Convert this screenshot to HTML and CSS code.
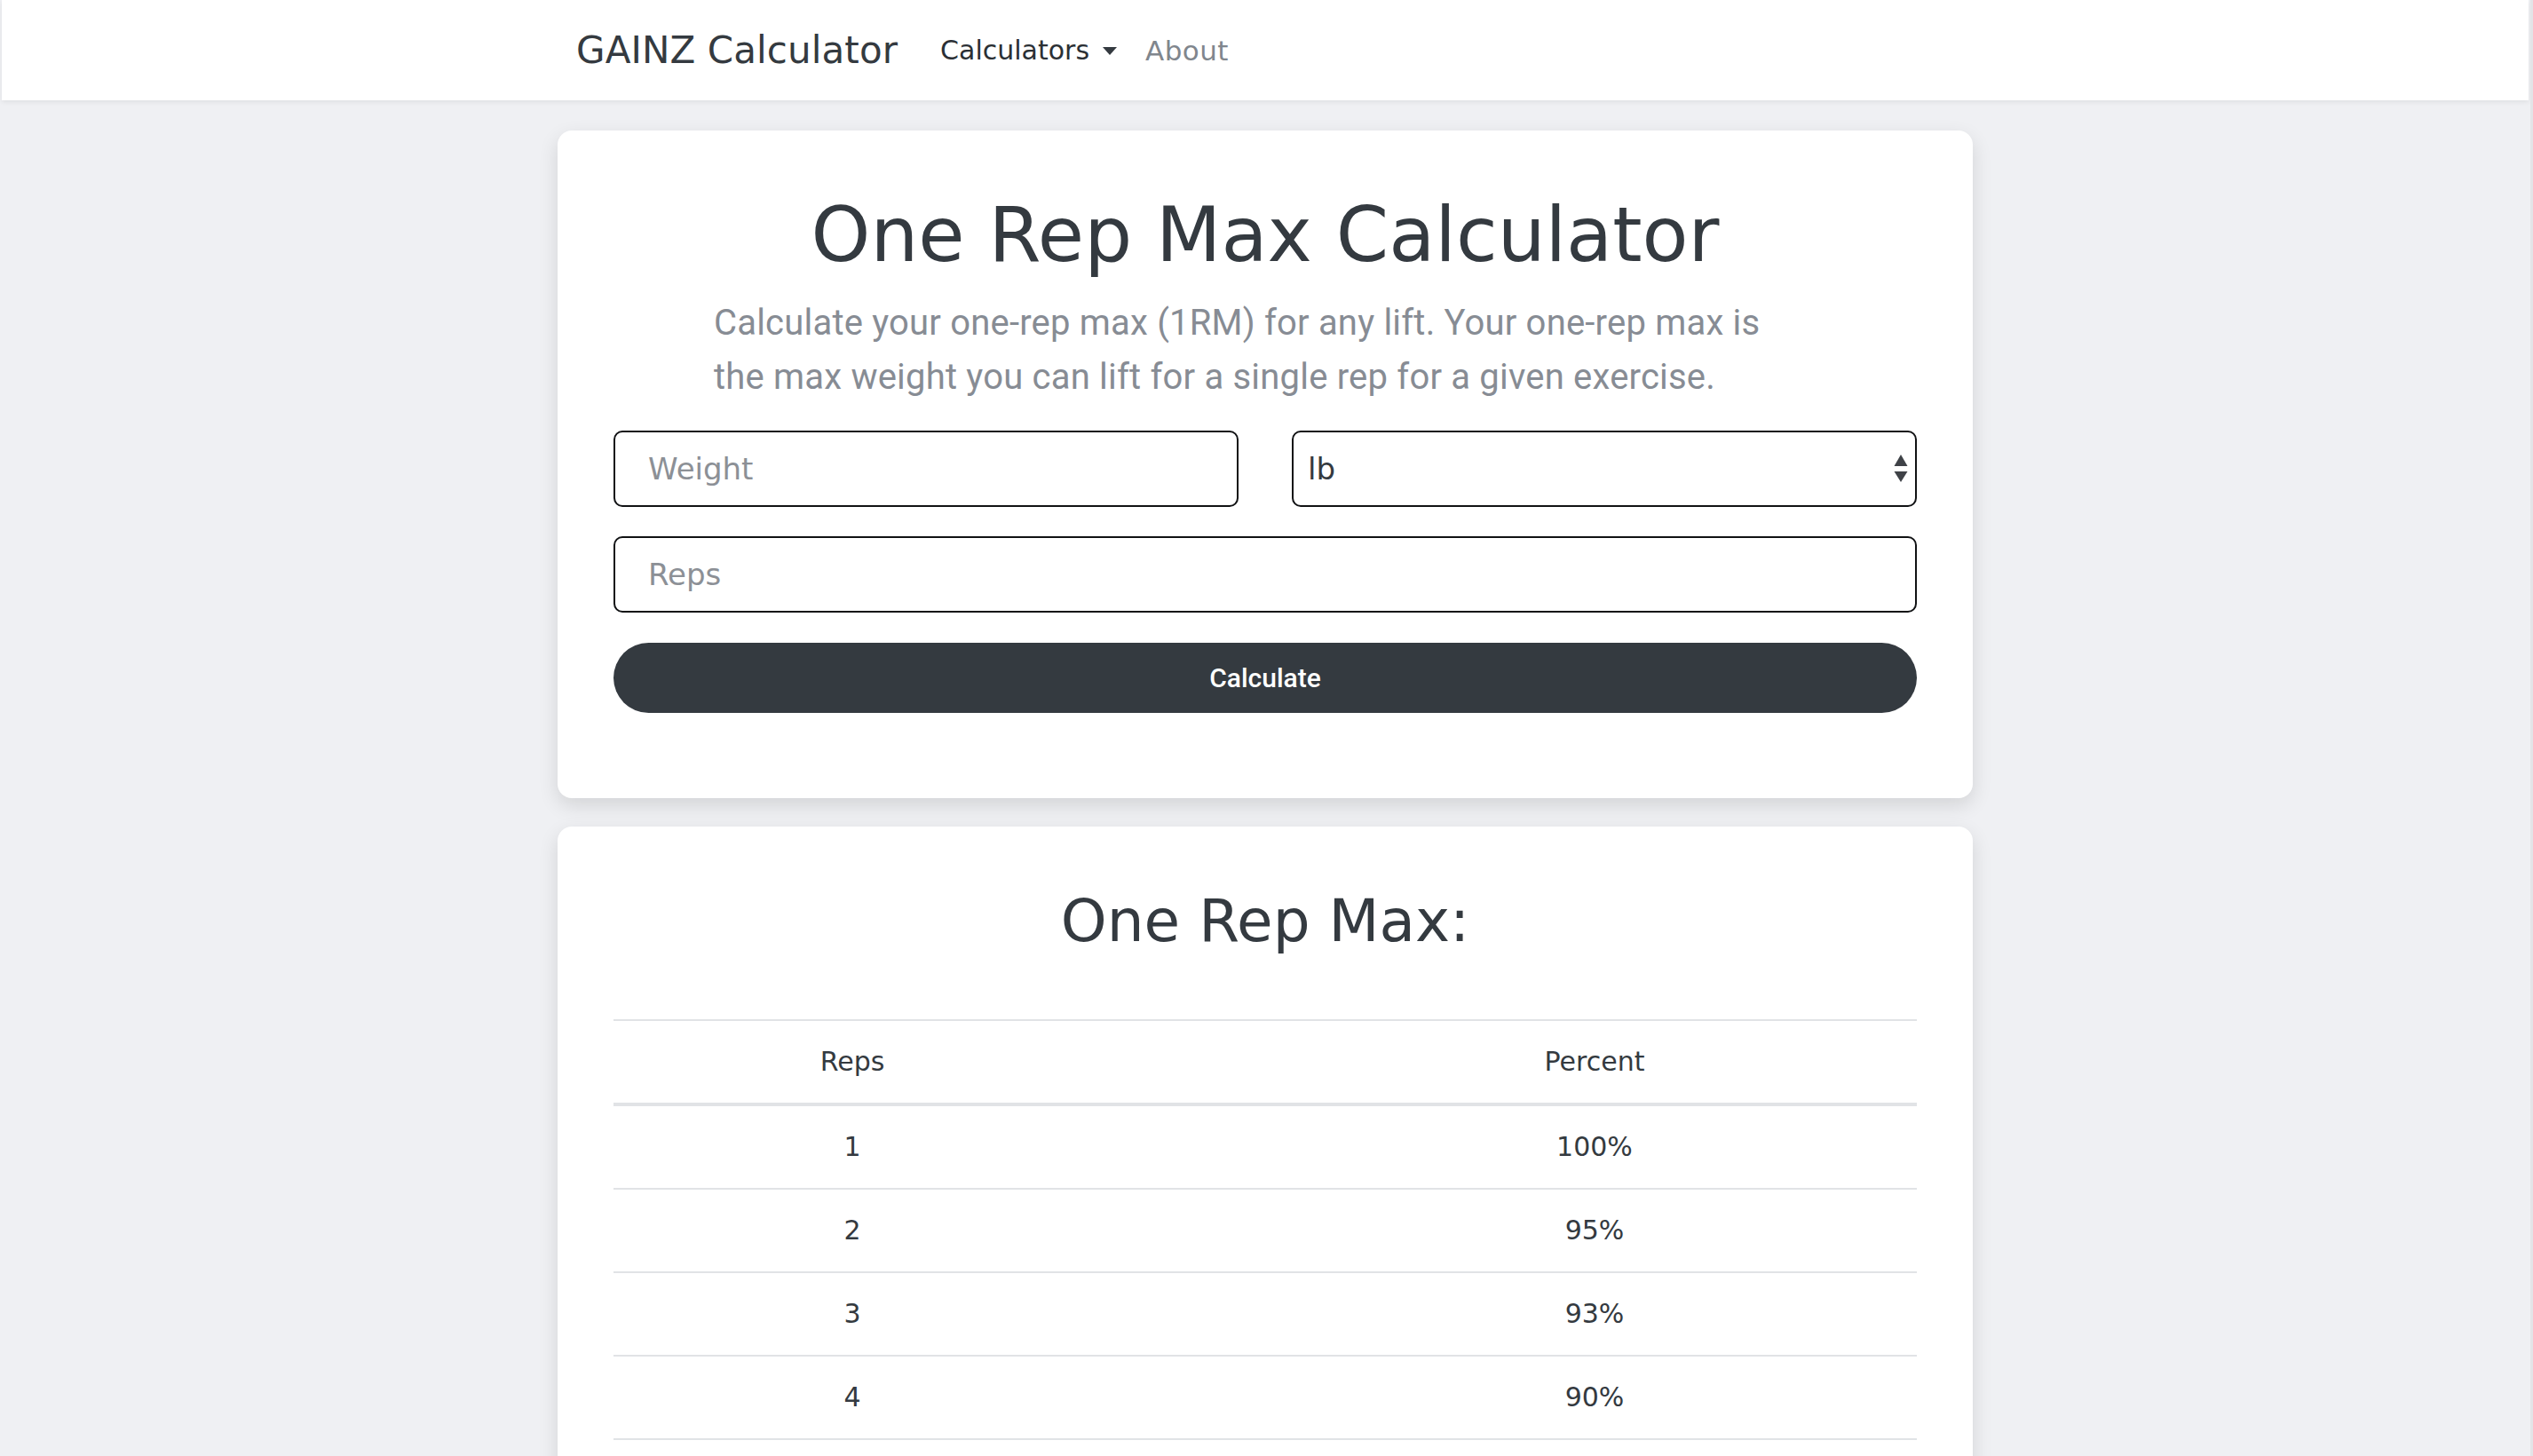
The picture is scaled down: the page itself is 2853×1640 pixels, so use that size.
FILE: index.html
```html
<!DOCTYPE html>
<html lang="en">
<head>
<meta charset="utf-8">
<title>One Rep Max Calculator | GAINZ Calculator</title>
<link rel="stylesheet" href="styles.css">
</head>
<body>
<header class="navbar">
  <div class="container nav-inner">
    <a class="brand" href="#">GAINZ Calculator</a>
    <nav class="nav-links">
      <a class="nav-link nav-dropdown" href="#">Calculators<span class="caret"></span></a>
      <a class="nav-link nav-muted" href="#">About</a>
    </nav>
  </div>
</header>
<main class="container main">
  <section class="card">
    <h1 class="title">One Rep Max Calculator</h1>
    <p class="lead">Calculate your one-rep max (1RM) for any lift. Your one-rep max is<br>the max weight you can lift for a single rep for a given exercise.</p>
    <form class="form">
      <div class="form-row">
        <input class="field" type="text" placeholder="Weight">
        <div class="select-wrap">
          <select class="field select">
            <option>lb</option>
            <option>kg</option>
          </select>
          <svg class="select-arrows" width="16" height="32" viewBox="0 0 16 32" aria-hidden="true">
            <path d="M8 0 L15.5 13 L0.5 13 Z" fill="#3f4247"/>
            <path d="M0.5 19 L15.5 19 L8 31 Z" fill="#3f4247"/>
          </svg>
        </div>
      </div>
      <input class="field" type="text" placeholder="Reps">
      <button class="btn" type="button">Calculate</button>
    </form>
  </section>
  <section class="card">
    <h2 class="subtitle">One Rep Max:</h2>
    <table class="table">
      <thead>
        <tr><th class="col-reps">Reps</th><th class="col-pct">Percent</th></tr>
      </thead>
      <tbody>
        <tr><td class="col-reps">1</td><td class="col-pct">100%</td></tr>
        <tr><td class="col-reps">2</td><td class="col-pct">95%</td></tr>
        <tr><td class="col-reps">3</td><td class="col-pct">93%</td></tr>
        <tr><td class="col-reps">4</td><td class="col-pct">90%</td></tr>
        <tr><td class="col-reps">5</td><td class="col-pct">87%</td></tr>
        <tr><td class="col-reps">6</td><td class="col-pct">85%</td></tr>
        <tr><td class="col-reps">7</td><td class="col-pct">83%</td></tr>
        <tr><td class="col-reps">8</td><td class="col-pct">80%</td></tr>
        <tr><td class="col-reps">9</td><td class="col-pct">77%</td></tr>
        <tr><td class="col-reps">10</td><td class="col-pct">75%</td></tr>
      </tbody>
    </table>
  </section>
</main>
</body>
</html>
```
FILE: styles.css
```css
html, body {
  margin: 0;
  padding: 0;
  overflow: hidden;
}

body {
  background: #eff0f3;
  border-right: 3px solid #e3e4e7;
  font-family: "DejaVu Sans", "Noto Sans", sans-serif;
  color: #343a40;
  min-height: 100vh;
  box-sizing: border-box;
}

a {
  text-decoration: none;
}

.container {
  width: 1594px;
  margin: 0 auto;
  box-sizing: border-box;
}

/* Navbar */
.navbar {
  background: #ffffff;
  margin: 0 2px 0 2px;
  height: 113px;
  box-shadow: 0 2px 5px rgba(0, 0, 0, 0.07);
  position: relative;
  z-index: 1;
}

.nav-inner {
  display: flex;
  align-items: center;
  height: 113px;
  padding-left: 21px;
}

.brand {
  font-size: 42px;
  line-height: 42px;
  color: #343a40;
  margin-right: 32px;
  letter-spacing: 0.1px;
}

.nav-links {
  display: flex;
  align-items: center;
  padding-top: 1px;
}

.nav-link {
  font-size: 30px;
  line-height: 30px;
  padding: 0 16px;
  display: flex;
  align-items: center;
}

.nav-dropdown {
  color: #2b3035;
}

.caret {
  display: inline-block;
  width: 0;
  height: 0;
  margin-left: 15px;
  margin-top: 1px;
  border-top: 9px solid #343a40;
  border-left: 8px solid transparent;
  border-right: 8px solid transparent;
}

.nav-muted {
  color: #80868d;
  font-size: 31px;
  letter-spacing: 0.4px;
}

/* Main */
.main {
  padding-top: 34px;
  display: flex;
  flex-direction: column;
  gap: 32px;
}

.card {
  background: #ffffff;
  border-radius: 16px;
  box-shadow: 0 8px 22px rgba(0, 0, 0, 0.12);
  padding: 67px 63px 96px;
}

.title {
  margin: 0;
  text-align: center;
  font-weight: normal;
  font-size: 85px;
  line-height: 102px;
  color: #343a40;
}

.lead {
  width: 1242px;
  margin: 17px auto 0;
  font-family: Roboto, "Liberation Sans", sans-serif;
  font-size: 40px;
  line-height: 61px;
  color: #878c94;
  white-space: nowrap;
  letter-spacing: 0.2px;
}

/* Form */
.form {
  margin-top: 30px;
  display: flex;
  flex-direction: column;
  gap: 33px;
}

.form-row {
  display: grid;
  grid-template-columns: 1fr 1fr;
  gap: 60px;
}

.field {
  display: block;
  width: 100%;
  box-sizing: border-box;
  height: 86px;
  border: 2px solid #111214;
  border-radius: 10px;
  background: #ffffff;
  padding: 0 20px 0 37px;
  font-family: "DejaVu Sans", sans-serif;
  font-size: 34px;
  color: #343a40;
  outline: none;
}

.field::placeholder {
  color: #8c9096;
}

.select-wrap {
  position: relative;
}

.select {
  appearance: none;
  -webkit-appearance: none;
  padding-left: 16px;
}

.select-arrows {
  position: absolute;
  right: 10px;
  top: 27px;
  pointer-events: none;
}

.btn {
  display: block;
  width: 100%;
  height: 79px;
  border: none;
  border-radius: 40px;
  background: #343a40;
  color: #ffffff;
  font-family: Roboto, "Liberation Sans", sans-serif;
  font-weight: 500;
  font-size: 30px;
  cursor: pointer;
  margin-top: 1px;
}

/* Results */
.subtitle {
  margin: 0;
  text-align: center;
  font-weight: normal;
  font-size: 66px;
  line-height: 79px;
  color: #343a40;
}

.table {
  width: 100%;
  margin-top: 71px;
  border-collapse: collapse;
  font-size: 30px;
  line-height: 44px;
  color: #343a40;
}

.table th,
.table td {
  padding: 24px;
  text-align: center;
  font-weight: normal;
  border-top: 2px solid #e1e3e6;
}

.table thead th {
  border-bottom: 4px solid #e1e3e6;
}

.col-reps {
  width: 490px;
}

.col-pct {
  padding-left: 228px !important;
}
```
